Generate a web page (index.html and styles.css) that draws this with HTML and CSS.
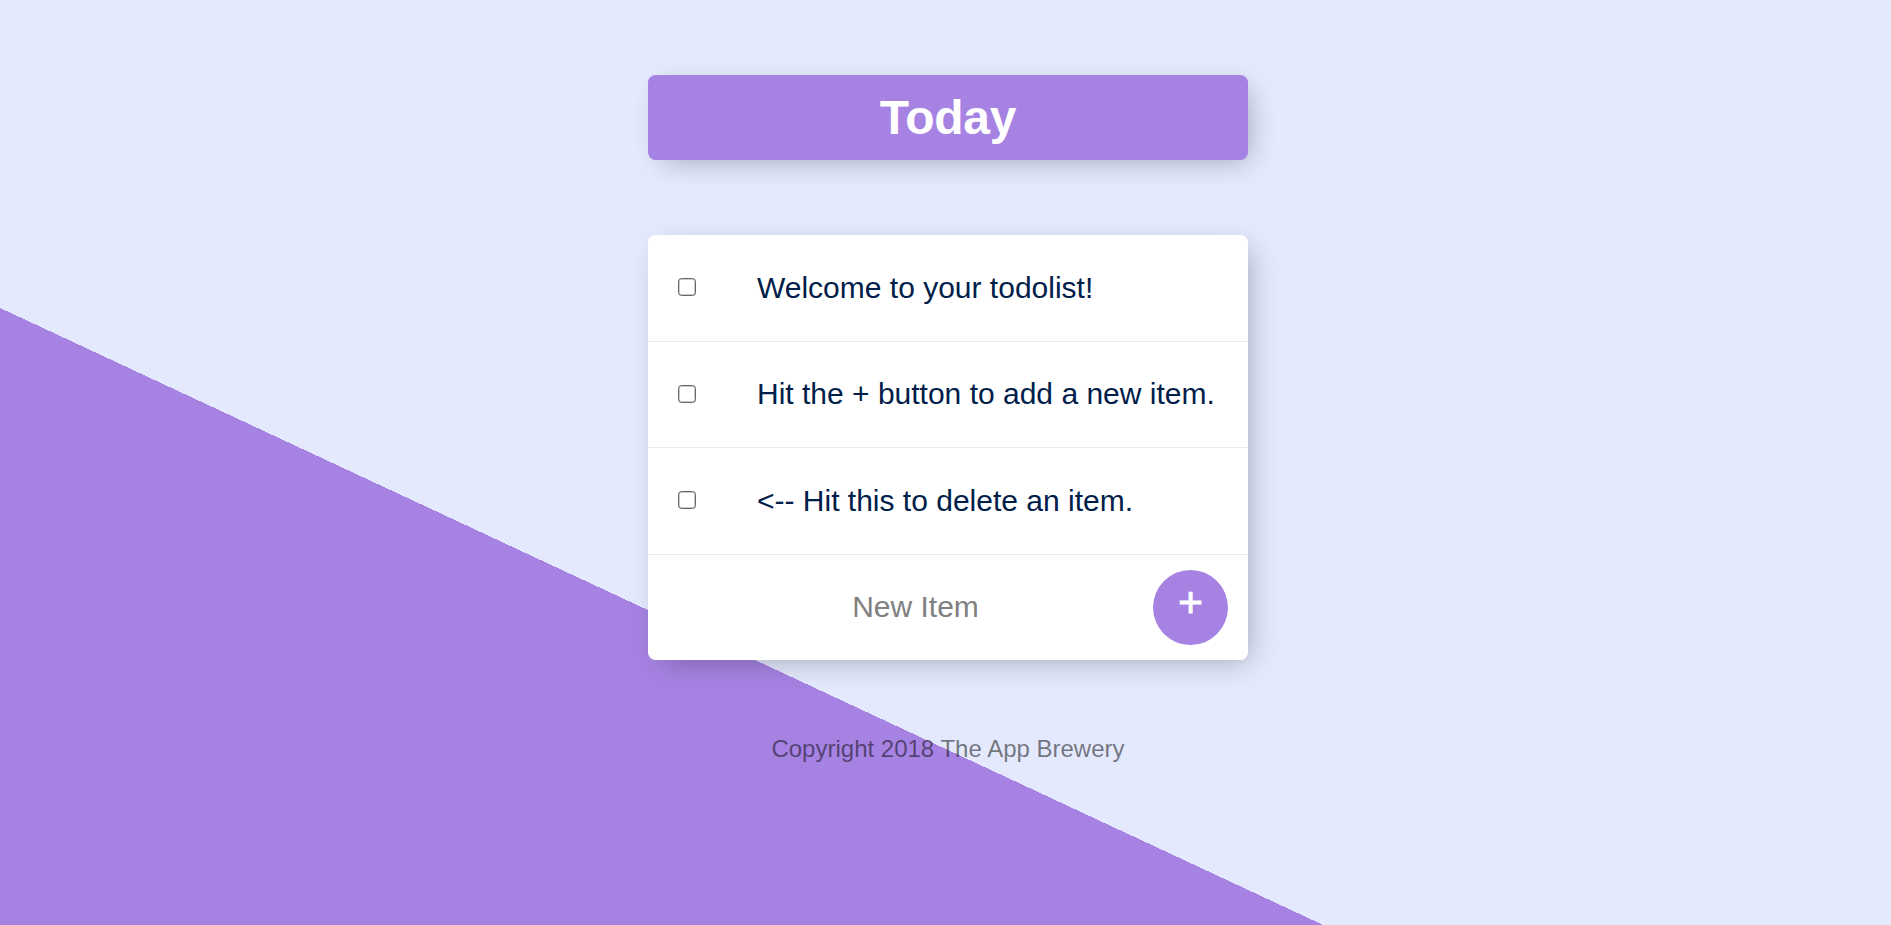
FILE: index.html
```html
<!DOCTYPE html>
<html lang="en">
<head>
<meta charset="utf-8">
<title>To Do List</title>
<link rel="stylesheet" href="styles.css">
</head>
<body>
<div class="box heading"><h1>Today</h1></div>
<div class="box">
<div class="item"><input type="checkbox" class="check"><p class="text">Welcome to your todolist!</p></div>
<div class="item"><input type="checkbox" class="check"><p class="text">Hit the + button to add a new item.</p></div>
<div class="item"><input type="checkbox" class="check"><p class="text">&lt;-- Hit this to delete an item.</p></div>
<form class="item new-item"><input type="text" class="field" placeholder="New Item" autocomplete="off"><button type="button" class="add">+</button></form>
</div>
<footer class="footer">Copyright 2018 The App Brewery</footer>
</body>
</html>
```

FILE: styles.css
```css
html {
  background-color: #e4e9fd;
  background-image: linear-gradient(25deg, #a683e3 50%, #e4e9fd 50%);
  background-size: 1896px 1500px;
  background-repeat: no-repeat;
  font-family: "Liberation Sans", Arial, sans-serif;
  font-size: 24px;
}
body { margin: 0; padding: 75px 0 0 5px; }
h1 {
  margin: 0;
  padding: 15px;
  color: #fff;
  font-size: 48px;
  line-height: 55px;
  letter-spacing: -0.3px;
}
.box {
  width: 600px;
  margin: 0 auto 75px;
  background: #fff;
  border-radius: 7.5px;
  box-shadow: 7.5px 7.5px 28px -7.5px rgba(0, 0, 0, 0.3);
}
.heading { background: #a683e3; text-align: center; }
.item {
  min-height: 105.5px;
  display: flex;
  align-items: center;
  border-bottom: 1px solid #ececec;
}
.item:last-child { border-bottom: 0; }
.check {
  appearance: none;
  box-sizing: border-box;
  width: 18px;
  height: 18px;
  margin: 30px 31px 31px 30px;
  border: 1px solid #666;
  border-radius: 3.5px;
  background: #fff;
  box-shadow: inset 0 0 0 0.5px #999;
}
.text {
  margin: 0;
  padding: 30px;
  color: #00204a;
  font-size: 30px;
  line-height: 34px;
}
.new-item { margin-left: 30px; }
.field {
  box-sizing: border-box;
  width: 475px;
  height: 90px;
  padding: 0;
  border: 0;
  background: transparent;
  text-align: center;
  font: 30px "Liberation Sans", Arial, sans-serif;
}
.field::placeholder { color: #808080; }
.add {
  width: 75px;
  height: 75px;
  padding: 0 0 9px;
  border: 0;
  border-radius: 50%;
  background: #a683e3;
  color: #fff;
  font: 43px "Liberation Sans", Arial, sans-serif;
  -webkit-text-stroke: 0.8px #fff;
}
.footer { color: rgba(0, 0, 0, 0.5); text-align: center; }
```
